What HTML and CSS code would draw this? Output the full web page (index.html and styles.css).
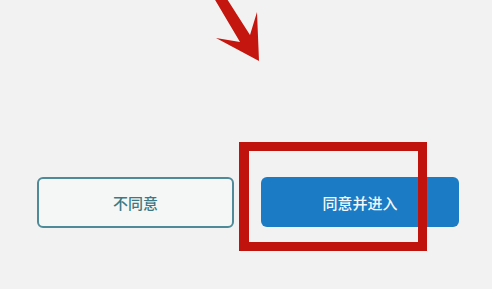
FILE: index.html
```html
<!DOCTYPE html>
<html lang="zh">
<head>
<meta charset="utf-8">
<link rel="stylesheet" href="styles.css">
</head>
<body>
<div class="page">
  <div class="actions">
    <button class="btn btn-outline">不同意</button>
    <button class="btn btn-primary">同意并进入</button>
  </div>
  <svg class="arrow" width="492" height="80" viewBox="0 0 492 80">
    <polygon points="208,-12 240,42 216,38 259,61 257,12 250,35 220,-12" fill="#c4160f"/>
  </svg>
  <div class="highlight"></div>
</div>
</body>
</html>
```
FILE: styles.css
```css
html, body {
  margin: 0;
  padding: 0;
  background: #f2f2f2;
  width: 492px;
  height: 289px;
  overflow: hidden;
}
.page {
  position: relative;
  width: 492px;
  height: 289px;
  font-family: "Noto Sans CJK SC", "Noto Sans", sans-serif;
}
.actions {
  display: flex;
  gap: 27px;
  padding: 177px 0 0 37px;
}
.btn {
  height: 51px;
  border-radius: 6px;
  font-family: inherit;
  font-size: 15px;
  font-weight: 500;
  padding: 0;
  display: flex;
  align-items: center;
  justify-content: center;
}
.btn-outline {
  width: 197px;
  background: #f5f6f6;
  border: 2px solid #4f8a98;
  color: #3b7a84;
}
.btn-primary {
  width: 198px;
  height: 50px;
  background: #1b7cc5;
  border: none;
  color: #f4f8fc;
}
.arrow {
  position: absolute;
  left: 0;
  top: 0;
}
.highlight {
  position: absolute;
  left: 239px;
  top: 142px;
  width: 169px;
  height: 91px;
  border: 9px solid #c0130e;
  border-left-width: 10px;
}
```
